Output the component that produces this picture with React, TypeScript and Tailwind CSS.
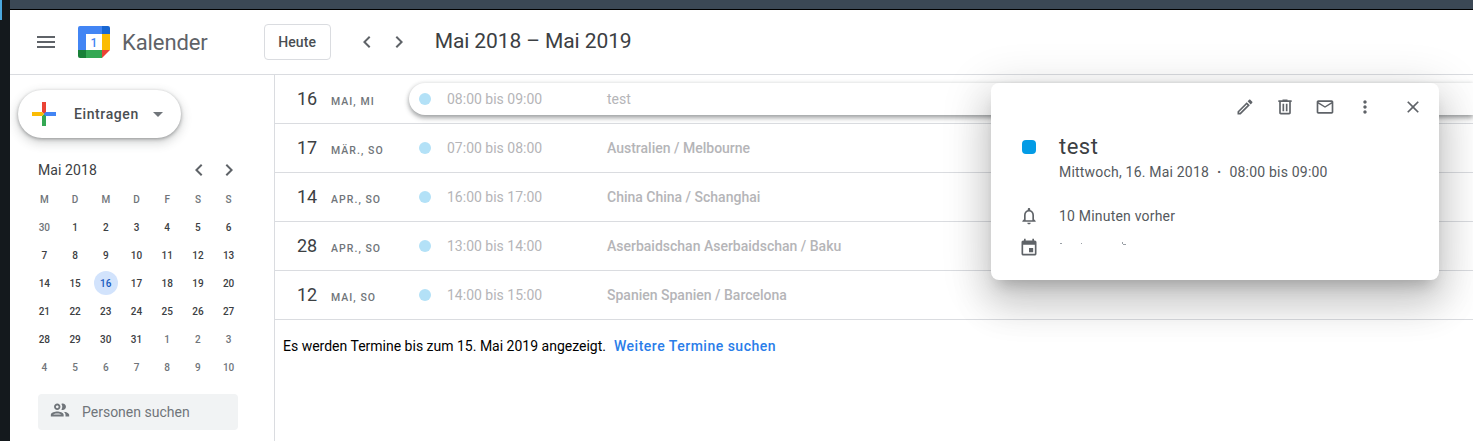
const days = [
  ["30", "1", "2", "3", "4", "5", "6"],
  ["7", "8", "9", "10", "11", "12", "13"],
  ["14", "15", "16", "17", "18", "19", "20"],
  ["21", "22", "23", "24", "25", "26", "27"],
  ["28", "29", "30", "31", "1", "2", "3"],
  ["4", "5", "6", "7", "8", "9", "10"],
]

const rows = [
  { day: "17", label: "MÄR., SO", time: "07:00 bis 08:00", title: "Australien / Melbourne" },
  { day: "14", label: "APR., SO", time: "16:00 bis 17:00", title: "China China / Schanghai" },
  { day: "28", label: "APR., SO", time: "13:00 bis 14:00", title: "Aserbaidschan Aserbaidschan / Baku" },
  { day: "12", label: "MAI, SO", time: "14:00 bis 15:00", title: "Spanien Spanien / Barcelona" },
]

function Icon({ d, className }: { d: string; className: string }) {
  return (
    <svg viewBox="0 0 24 24" fill="currentColor" className={className}>
      <path d={d} />
    </svg>
  )
}

const chevronLeft = "M15.41 7.41L14 6l-6 6 6 6 1.41-1.41L10.83 12z"
const chevronRight = "M10 6L8.59 7.41 13.17 12l-4.58 4.59L10 18l6-6z"

function Logo() {
  return (
    <svg viewBox="0 0 32 32" className="w-8 h-8 shrink-0">
      <path d="M2 0h22v8H8v16H0V2a2 2 0 0 1 2-2z" fill="#4285f4" />
      <path d="M24 0h6a2 2 0 0 1 2 2v6h-8z" fill="#1967d2" />
      <rect x="24" y="8" width="8" height="16" fill="#fbbc04" />
      <rect x="8" y="24" width="16" height="8" fill="#34a853" />
      <path d="M0 24h8v8H2a2 2 0 0 1-2-2z" fill="#188038" />
      <path d="M24 24h8l-8 8z" fill="#ea4335" />
      <text x="16" y="21" textAnchor="middle" fontSize="12" fontWeight="500" fill="#4285f4" fontFamily="Roboto, sans-serif">1</text>
    </svg>
  )
}

function Plus() {
  return (
    <svg viewBox="0 0 24 24" className="w-6 h-6 shrink-0">
      <rect x="10" y="0" width="4" height="10" fill="#ea4335" />
      <rect x="12" y="10" width="12" height="4" fill="#4285f4" />
      <rect x="10" y="14" width="4" height="10" fill="#34a853" />
      <rect x="0" y="10" width="10" height="4" fill="#fbbc04" />
      <path d="M10 10h4l-2 2z" fill="#ea4335" />
      <path d="M10 14h4l-2-2z" fill="#34a853" />
      <path d="M10 10v4l2-2z" fill="#fbbc04" />
      <path d="M14 10v4l-2-2z" fill="#4285f4" />
    </svg>
  )
}

function DateCell({ day, label }: { day: string; label: string }) {
  return (
    <div className="w-[134px] pl-[22px] flex items-baseline shrink-0">
      <span className="w-[34px] text-lg leading-6 text-[#3c4043]">{day}</span>
      <span className="text-[10.5px] font-medium tracking-[1.05px] text-[#70757a]">{label}</span>
    </div>
  )
}

export default function App() {
  return (
    <div className="relative flex h-[441px] w-full overflow-hidden bg-white font-['Roboto',sans-serif]">
      {/* window edge */}
      <div className="relative w-[10px] shrink-0 bg-[#14191d]">
        <div className="absolute left-0 top-0 w-[2px] h-5 bg-[#4aa8e0]" />
      </div>

      <div className="flex-1 flex flex-col min-w-0">
        <div className="h-[10px] shrink-0 bg-[#3b4855] border-b border-black" />

        {/* Header */}
        <header className="h-[65px] shrink-0 flex items-center border-b border-[#dadce0] pl-6">
          <Icon d="M3 18h18v-2H3v2zm0-5h18v-2H3v2zm0-7v2h18V6H3z" className="w-6 h-6 text-[#5f6368]" />
          <div className="ml-5">
            <Logo />
          </div>
          <span className="ml-3 text-[22px] tracking-[-0.1px] text-[#5f6368]">Kalender</span>
          <button className="ml-[56px] w-[67px] h-9 border border-[#dadce0] rounded text-sm font-medium tracking-[0.1px] text-[#4a4e52]">
            Heute
          </button>
          <Icon d={chevronLeft} className="ml-6 w-6 h-6 text-[#5f6368]" />
          <Icon d={chevronRight} className="ml-2 w-6 h-6 text-[#5f6368]" />
          <h1 className="ml-6 text-[21px] tracking-[-0.1px] text-[#3c4043]">Mai 2018 – Mai 2019</h1>
        </header>

        <div className="flex-1 flex min-h-0">
          {/* Sidebar */}
          <aside className="w-[265px] shrink-0 border-r border-[#dadce0] flex flex-col">
            <button className="mt-[15px] ml-2 w-[163px] h-12 shrink-0 rounded-full bg-white flex items-center pl-[14px] shadow-[0_1px_3px_rgba(60,64,67,0.3),0_4px_8px_3px_rgba(60,64,67,0.15),0_2px_4px_rgba(0,0,0,0.15)]">
              <Plus />
              <span className="ml-[18px] text-sm font-medium tracking-[0.6px] text-[#4a4e52]">Eintragen</span>
              <span className="ml-[14px] w-0 h-0 border-x-[5px] border-t-[5px] border-x-transparent border-t-[#70757a]" />
            </button>

            <div className="mt-[20px] pl-7 pr-[34px] flex items-center justify-between h-6">
              <span className="text-sm tracking-[0.1px] text-[#3c4043]">Mai 2018</span>
              <div className="flex gap-[6px] mr-[-1px]">
                <Icon d={chevronLeft} className="w-6 h-6 text-[#5f6368]" />
                <Icon d={chevronRight} className="w-6 h-6 text-[#5f6368]" />
              </div>
            </div>

            <div className="mt-[4px] ml-[19px] w-[215px] grid grid-cols-7 grid-rows-[27px_repeat(6,28px)] text-[10px] font-medium">
              {["M", "D", "M", "D", "F", "S", "S"].map((d, i) => (
                <div key={i} className="flex items-center justify-center text-[#70757a]">{d}</div>
              ))}
              {days.flatMap((week, w) =>
                week.map((d, i) => {
                  const muted = (w === 0 && i === 0) || (w === 4 && i > 3) || w === 5
                  const today = w === 2 && i === 2
                  return (
                    <div key={w + "-" + i} className="flex items-center justify-center">
                      {today ? (
                        <span className="w-6 h-6 rounded-full bg-[#d2e3fc] text-[#185abc] flex items-center justify-center">{d}</span>
                      ) : (
                        <span className={muted ? "text-[#70757a]" : "text-[#3c4043]"}>{d}</span>
                      )}
                    </div>
                  )
                })
              )}
            </div>

            <div className="mt-[13px] ml-7 w-[200px] h-9 shrink-0 rounded bg-[#f1f3f4] flex items-center pl-[11px]">
              <Icon
                d="M9 13.75c-2.34 0-7 1.17-7 3.5V19h14v-1.75c0-2.33-4.66-3.5-7-3.5zM4.34 17c.84-.58 2.87-1.25 4.66-1.25s3.82.67 4.66 1.25H4.34zM9 12c1.93 0 3.5-1.57 3.5-3.5S10.93 5 9 5 5.5 6.57 5.5 8.5 7.07 12 9 12zm0-5c.83 0 1.5.67 1.5 1.5S9.83 10 9 10s-1.5-.67-1.5-1.5S8.17 7 9 7zm7.04 6.81c1.16.84 1.96 1.96 1.96 3.44V19h4v-1.75c0-2.02-3.5-3.17-5.96-3.44zM15 12c1.93 0 3.5-1.57 3.5-3.5S16.93 5 15 5c-.54 0-1.04.13-1.5.35.63.89 1 1.98 1 3.15s-.37 2.26-1 3.15c.46.22.96.35 1.5.35z"
                className="w-[22px] h-[22px] mb-[4px] text-[#70757a]"
              />
              <span className="ml-[11px] text-sm text-[#70757a]">Personen suchen</span>
            </div>
          </aside>

          {/* Agenda */}
          <main className="flex-1 min-w-0">
            <div className="h-[49px] flex items-center border-b border-[#dadce0]">
              <DateCell day="16" label="MAI, MI" />
              <div className="flex-1 h-8 flex items-center pl-[10px] bg-white rounded-l-full shadow-[0_3px_5px_rgba(60,64,67,0.45),0_0_4px_rgba(60,64,67,0.15)]">
                <span className="w-3 h-3 rounded-full bg-[#b3e1f7] shrink-0" />
                <span className="w-[160px] ml-4 text-sm text-[#b5b5b8] shrink-0">08:00 bis 09:00</span>
                <span className="text-sm text-[#b5b5b8]">test</span>
              </div>
            </div>
            {rows.map((r) => (
              <div key={r.day} className="h-[49px] flex items-center border-b border-[#dadce0]">
                <DateCell day={r.day} label={r.label} />
                <div className="flex items-center pl-[10px]">
                  <span className="w-3 h-3 rounded-full bg-[#b3e1f7] shrink-0" />
                  <span className="w-[160px] ml-4 text-sm text-[#b5b5b8] shrink-0">{r.time}</span>
                  <span className="text-sm font-medium text-[#b5b5b8]">{r.title}</span>
                </div>
              </div>
            ))}
            <p className="mt-4 pl-2 text-sm leading-5 text-black">
              Es werden Termine bis zum 15. Mai 2019 angezeigt.
              <a className="ml-2 font-medium tracking-[0.5px] text-[#2a7de9]">Weitere Termine suchen</a>
            </p>
          </main>
        </div>
      </div>

      {/* Event popover */}
      <div className="absolute left-[991px] top-[83px] w-[448px] h-[197px] bg-white rounded-lg shadow-[0_24px_38px_3px_rgba(0,0,0,0.14),0_9px_46px_8px_rgba(0,0,0,0.12),0_11px_15px_-7px_rgba(0,0,0,0.2)]">
        <div className="h-12 flex items-center justify-end pr-4 text-[#5f6368]">
          <div className="flex gap-5">
            <Icon d="M14.06 9.02l.92.92L5.92 19H5v-.92l9.06-9.06M17.66 3c-.25 0-.51.1-.7.29l-1.83 1.83 3.75 3.75 1.83-1.83c.39-.39.39-1.02 0-1.41l-2.34-2.34c-.2-.2-.45-.29-.71-.29zm-3.6 3.19L3 17.25V21h3.75L17.81 9.94l-3.75-3.75z" className="w-5 h-5" />
            <Icon d="M15 4V3H9v1H4v2h1v13c0 1.1.9 2 2 2h10c1.1 0 2-.9 2-2V6h1V4h-5zm2 15H7V6h10v13zM9 8h2v9H9zm4 0h2v9h-2z" className="w-5 h-5" />
            <Icon d="M20 4H4c-1.1 0-2 .9-2 2v12c0 1.1.9 2 2 2h16c1.1 0 2-.9 2-2V6c0-1.1-.9-2-2-2zm0 14H4V8l8 5 8-5v10zm-8-7L4 6h16l-8 5z" className="w-5 h-5" />
            <Icon d="M12 8c1.1 0 2-.9 2-2s-.9-2-2-2-2 .9-2 2 .9 2 2 2zm0 2c-1.1 0-2 .9-2 2s.9 2 2 2 2-.9 2-2-.9-2-2-2zm0 6c-1.1 0-2 .9-2 2s.9 2 2 2 2-.9 2-2-.9-2-2-2z" className="w-5 h-5" />
          </div>
          <Icon d="M19 6.41L17.59 5 12 10.59 6.41 5 5 6.41 10.59 12 5 17.59 6.41 19 12 13.41 17.59 19 19 17.59 13.41 12z" className="ml-7 w-5 h-5" />
        </div>

        <div className="flex">
          <div className="w-[68px] shrink-0 pl-[31px] pt-[9px]">
            <div className="w-[14px] h-[14px] rounded bg-[#039be5]" />
          </div>
          <div>
            <div className="pt-[2px] text-[22px] leading-7 tracking-[0.5px] text-[#3c4043]">test</div>
            <div className="mt-[1px] text-sm leading-5 tracking-[0.2px] text-[#55595d]">
              Mittwoch, 16. Mai 2018
              <span className="mx-[8px] font-bold">·</span>
              08:00 bis 09:00
            </div>
          </div>
        </div>

        <div className="mt-[24px] flex items-center text-[#5f6368]">
          <div className="w-[68px] shrink-0 pl-[28px]">
            <Icon d="M12 22c1.1 0 2-.9 2-2h-4c0 1.1.9 2 2 2zm6-6v-5c0-3.07-1.63-5.64-4.5-6.32V4c0-.83-.67-1.5-1.5-1.5s-1.5.67-1.5 1.5v.68C7.64 5.36 6 7.92 6 11v5l-2 2v1h16v-1l-2-2zm-2 1H8v-6c0-2.48 1.51-4.5 4-4.5s4 2.02 4 4.5v6z" className="w-5 h-5" />
          </div>
          <span className="text-sm leading-5 tracking-[0.2px] text-[#55595d]">10 Minuten vorher</span>
        </div>

        <div className="mt-[12px] flex items-start text-[#5f6368]">
          <div className="w-[68px] shrink-0 pl-[28px]">
            <Icon d="M17 12h-5v5h5v-5zM16 1v2H8V1H6v2H5c-1.11 0-1.99.9-1.99 2L3 19c0 1.1.89 2 2 2h14c1.1 0 2-.9 2-2V5c0-1.1-.9-2-2-2h-1V1h-2zm3 18H5V8h14v11z" className="w-5 h-5" />
          </div>
          <svg viewBox="0 0 70 4" className="w-[70px] h-1 mt-[4px] text-[#9aa0a6]" fill="currentColor">
            <rect x="1" y="1" width="2" height="1" />
            <rect x="22" y="1" width="1" height="1" />
            <rect x="63" y="0" width="1" height="2" />
            <rect x="64" y="2" width="3" height="1" />
          </svg>
        </div>
      </div>
    </div>
  )
}
